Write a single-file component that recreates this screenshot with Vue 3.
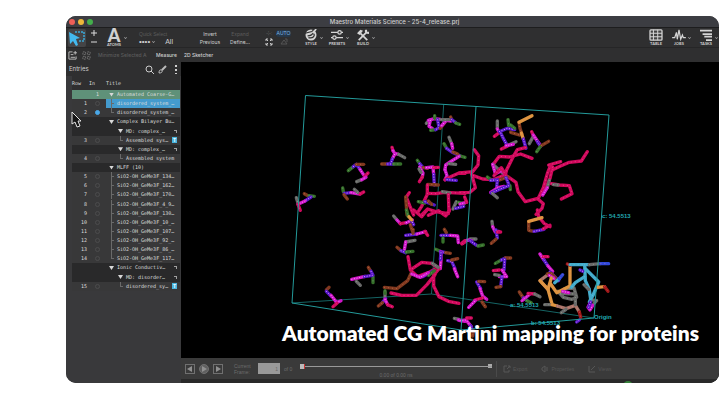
<script setup>
import { ref } from 'vue'

const names = ['134', '162', '170', '4_9', '130', '10_', '107', '92_', '86_', '117']
const rows = [
  { inc: '1', title: 'Automated Coarse-G…', kind: 'group', level: 0, state: 'active' },
  { n: 1, title: 'disordered_system_…', kind: 'entry', level: 0, state: 'selected' },
  { n: 2, title: 'disordered_system_…', kind: 'entry', level: 0, on: true, last: true },
  { title: 'Complex Bilayer Bu…', kind: 'group', level: 0 },
  { title: 'MD: complex_…', kind: 'group', level: 1, mark: 'flag' },
  { n: 3, title: 'Assembled sys…', kind: 'entry', level: 1, mark: 'T', last: true },
  { title: 'MD: complex_…', kind: 'group', level: 1, mark: 'flag' },
  { n: 4, title: 'Assembled system', kind: 'entry', level: 1, last: true },
  { title: 'MLFF (10)', kind: 'group', level: 0 },
  ...names.map((s, i) => ({ n: i + 5, title: `SiO2-OH_GeMe3F_${s}…`, kind: 'entry', level: 0, last: i === 9 })),
  { title: 'Ionic Conductiv…', kind: 'group', level: 0, mark: 'flag' },
  { title: 'MD: disorder…', kind: 'group', level: 1, mark: 'flag' },
  { n: 15, title: 'disordered_sy…', kind: 'entry', level: 1, mark: 'T', last: true },
]

const frame = ref('1')
const position = ref(0)

// Sticks are listed as [colour class, points], on a grid three times finer than the scene.
const regions = [
  {
    at: 'translate(285 85) scale(.33333)',
    sticks: [
      ['w', '424,115 436,104'], ['m', '430,106 448,101 466,103'], ['g', '449,92 449,100'], ['m', '436,106 432,124 442,130'],
      ['g', '437,136 452,134'], ['v', '458,104 462,128 452,134'], ['b', '480,112 466,130'], ['m', '470,122 484,106 498,108'],
      ['b', '497,96 500,104'], ['v', '500,104 512,113'], ['g', '512,114 524,118'], ['w', '468,104 492,104'],
      ['w', '492,157 500,176'], ['m', '500,176 503,190'], ['g', '477,176 485,190'], ['v', '485,190 500,201 526,213'],
      ['b', '504,201 518,207'], ['g', '526,213 540,217'], ['m', '522,214 500,228 482,240 480,254'], ['w', '492,236 512,238'],
      ['m', '480,254 486,272 480,284'], ['p', '480,284 500,274 522,264 540,265'], ['v', '486,284 514,286'],
      ['p', '321,187 324,197'], ['m', '324,197 329,205 341,208'], ['w', '341,208 359,218'], ['m', '329,208 322,222'],
      ['v', '322,222 317,236'], ['b', '290,237 308,237'], ['v', '308,237 326,237'], ['g', '326,237 347,237'],
      ['g', '190,257 205,245'], ['v', '205,245 214,238 225,253'], ['b', '214,238 236,238'], ['m', '225,253 239,274'],
      ['p', '239,274 249,264'], ['w', '215,290 230,284'], ['m', '230,284 243,277'],
      ['g', '173,309 175,320'], ['v', '178,325 198,323'], ['b', '177,329 187,342'], ['m', '198,323 225,327'], ['p', '225,327 236,321'],
      ['w', '208,313 218,322'], ['b', '58,326 69,332'], ['g', '72,332 88,334'], ['v', '78,336 60,348'], ['m', '60,348 39,358'],
      ['w', '34,338 39,354'], ['p', '39,358 46,376'],
      ['g', '397,226 404,236'], ['v', '404,236 414,248'], ['b', '414,248 428,250'], ['m', '404,246 414,264 412,276'], ['p', '412,276 403,290'],
      ['w', '402,252 408,262'], ['m', '424,248 444,246 446,268'], ['v', '446,268 448,300'], ['p', '446,248 460,247'],
      ['b', '428,298 460,300'], ['p', '427,300 427,328 410,364 398,382'], ['p', '427,325 452,326 480,322 540,325'],
      ['w', '472,320 494,324'], ['p', '373,323 364,336 374,362 386,390'], ['b', '362,336 366,390'],
      ['p', '490,328 492,380'], ['g', '400,350 420,354'], ['v', '420,350 448,360'], ['b', '430,348 440,358'],
      ['p', '410,390 428,372 452,380 490,386'], ['w', '504,372 514,350'], ['v', '512,370 536,364'], ['g', '520,352 538,356'],
    ],
  },
  {
    at: 'translate(460 85) scale(.33333)',
    sticks: [
      ['w', '112,108 112,132'], ['m', '112,132 118,142'], ['p', '103,154 118,143'], ['v', '118,140 142,130 164,134'],
      ['g', '144,104 146,122'], ['g', '152,120 164,130'], ['b', '152,142 178,150'], ['v', '122,144 132,164 142,182'],
      ['p', '124,192 142,184'], ['w', '146,180 168,170'], ['m', '138,182 160,178'],
      ['b', '177,112 180,130 186,148'], ['o', '177,112 216,92'], ['o', '184,144 190,162'], ['v', '190,162 198,190'],
      ['p', '215,140 220,152'], ['w', '208,176 220,154'], ['m', '220,150 232,168 242,182'], ['v', '232,170 242,184'],
      ['b', '244,182 266,169'], ['g', '230,200 240,186'],
      ['p', '196,188 172,194 158,218 140,254 136,270 168,292 174,320 196,350 234,340'],
      ['p', '100,238 118,214 148,216 182,207 216,220'], ['p', '43,194 56,212 54,240 38,260 0,264'],
      ['p', '34,264 46,308 30,322 0,323'], ['p', '40,272 68,282 100,284 128,272'], ['w', '98,238 128,264'], ['m', '98,238 106,266 128,256 138,274'],
      ['p', '102,272 124,248 140,276'], ['g', '82,276 94,286'], ['v', '92,286 120,284'], ['b', '120,284 144,276'], ['v', '138,278 148,302'],
      ['g', '150,302 151,314'], ['v', '112,286 110,306'], ['m', '92,322 114,308 132,304'], ['v', '94,324 116,314 146,302'], ['w', '98,326 112,338'],
      ['p', '272,240 262,266 250,308 234,342 250,356 246,370 228,388'], ['p', '278,246 270,280 250,326'], ['p', '266,240 302,230'],
      ['p', '278,254 300,244 328,232 364,228 382,200'], ['w', '268,286 262,308'], ['m', '262,308 248,330'],
      ['p', '274,296 298,300 328,302 336,326 304,342'], ['w', '280,299 294,300'],
      ['m', '0,357 18,352'], ['p', '14,336 20,352'],
    ],
  },
  {
    at: 'translate(285 210) scale(.33333)',
    sticks: [
      ['w', '326,18 336,30'], ['m', '336,30 346,41'], ['p', '346,41 364,38'], ['m', '364,38 382,30'], ['v', '378,30 386,44'],
      ['g', '364,0 370,20'], ['b', '376,44 382,62'], ['o', '372,20 380,30'], ['v', '362,76 396,72'], ['m', '396,72 422,65'], ['p', '420,64 428,76'],
      ['b', '384,58 384,70'], ['p', '386,0 410,20 426,0'], ['p', '430,16 460,2 482,18 494,0'],
      ['w', '362,96 390,91'], ['m', '362,96 358,120'], ['b', '336,112 348,122'], ['v', '348,122 362,128'], ['g', '364,126 384,124'],
      ['g', '452,118 466,124'], ['v', '466,124 482,128'], ['b', '482,128 496,130'], ['m', '468,126 468,150 466,176'], ['v', '468,128 466,148'],
      ['b', '478,58 484,68'], ['v', '468,76 496,76'], ['g', '474,84 474,96'], ['m', '496,76 518,78 520,98'], ['p', '530,100 540,92'],
      ['v', '488,152 500,154 510,176'], ['b', '500,150 518,146'], ['m', '508,176 518,200'],
      ['p', '369,140 376,180 398,200 430,188 448,178'], ['p', '382,176 410,157 440,160 462,176 446,196 446,228 462,260 490,274 522,280'],
      ['p', '450,194 426,224 394,256 350,256 318,249'], ['b', '298,232 336,236 368,212 378,190'], ['w', '442,160 460,172'],
      ['v', '414,200 446,182'], ['g', '430,196 448,182'], ['m', '380,192 406,202 430,188'],
      ['b', '250,172 256,182'], ['v', '258,184 264,196'], ['g', '264,200 264,218'], ['m', '200,208 240,199'], ['v', '238,200 262,196'], ['w', '214,214 226,226'],
      ['b', '124,240 132,232'], ['v', '124,244 138,258'], ['m', '138,256 154,276'], ['m', '154,278 168,272'], ['p', '144,290 156,280'],
      ['w', '300,246 300,264'], ['g', '300,242 300,250'], ['v', '302,266 292,278'], ['b', '280,288 292,278'], ['m', '300,268 308,284'], ['p', '308,284 322,290'],
      ['w', '508,325 522,328'], ['m', '520,330 540,334'],
    ],
  },
  {
    at: 'translate(460 210) scale(.33333)',
    sticks: [
      ['p', '232,0 236,20 252,40 270,50'], ['b', '206,36 206,60'], ['o', '206,34 246,23'], ['b', '208,62 224,64'], ['v', '222,64 252,58'], ['p', '250,56 270,46'],
      ['w', '96,34 98,50'], ['m', '98,50 106,66 116,64'], ['v', '108,60 112,84'], ['b', '94,100 108,88'], ['p', '112,66 122,66'],
      ['w', '30,87 48,87'], ['m', '8,100 22,90 34,92'], ['v', '30,92 50,106'], ['g', '54,108 70,105'], ['p', '6,102 16,94'],
      ['g', '106,160 124,150'], ['v', '124,150 136,144'], ['b', '136,144 152,144'], ['v', '134,148 132,180'], ['m', '126,180 140,200 118,200'],
      ['p', '100,182 118,180'], ['w', '104,194 118,196'], ['v', '126,200 122,230'], ['b', '108,232 122,230'],
      ['m', '240,132 252,150'], ['p', '250,140 264,140'], ['v', '252,150 264,168'], ['m', '264,168 278,184'], ['v', '270,186 296,212'],
      ['v', '50,216 62,236'], ['b', '56,214 74,215'], ['m', '60,236 68,258 80,268'], ['p', '44,270 68,264'], ['b', '66,276 76,290'], ['m', '26,292 46,272'],
      ['b', '178,246 190,264'], ['v', '190,264 202,272'], ['m', '186,272 210,252'], ['p', '204,250 224,252'], ['w', '224,252 240,260'], ['g', '200,272 214,278'],
      ['m', '0,332 18,330 34,350'], ['p', '20,324 34,324'], ['v', '32,348 40,366'], ['b', '40,362 38,378'],
      ['w', '294,244 310,262 336,268 350,262 342,234 314,236 300,250 344,252'],
      ['t', '264,238 240,212 266,192'], ['b', '262,192 274,190 288,206'], ['m', '268,196 282,206'], ['o', '240,212 264,238 276,282'], ['o', '264,238 274,204'],
      ['w', '254,284 274,284'], ['o', '276,284 292,288'], ['t', '292,288 318,296 346,286'], ['w', '304,308 318,298'], ['t', '346,286 358,306'], ['r', '358,306 362,322'],
      ['v', '350,336 358,330'], ['o', '272,222 290,248 330,228 330,168'], ['r', '322,162 332,166'], ['c', '330,164 374,164 388,164'],
      ['w', '388,164 422,161'], ['n', '422,161 446,161'], ['c', '374,164 376,212 388,238'], ['c', '376,176 416,216 398,258'],
      ['c', '374,200 346,218 334,232'], ['c', '298,206 284,218'], ['n', '308,194 298,206'], ['m', '308,244 326,248'], ['w', '346,262 346,284'],
      ['c', '388,240 392,268'], ['w', '372,224 386,238'], ['w', '398,270 410,272 402,280'],
      ['c', '398,256 388,276'], ['m', '390,280 384,292 390,300 398,286'], ['v', '392,276 386,292'], ['o', '412,232 434,230'], ['r', '434,230 444,244'], ['v', '360,180 368,184'],
    ],
  },
]
</script>

<template>
  <main class="page">
    <section class="window">
      <header class="titlebar">
        <span class="light red"></span><span class="light yellow"></span><span class="light green"></span>
        <h1>Maestro Materials Science - 25-4_release.prj</h1>
      </header>

      <div class="toolbar">
        <button class="select-tool" aria-label="Select">
          <svg viewBox="0 0 18 18"><path d="M7 3H16V12H10" fill="none" stroke="#38a8d8" stroke-width="1.5" stroke-dasharray="2 1" /><path d="M1 3L2 15L5 12L8 17L10 16L8 10L12 9Z" fill="#43b9ee" /></svg>
        </button>
        <div class="stack plus">
          <button aria-label="Add to selection"><svg viewBox="0 0 8 8"><path d="M4 1V7M1 4H7" /></svg></button>
          <button aria-label="Remove from selection"><svg viewBox="0 0 8 8"><path d="M1 4H7" /></svg></button>
        </div>
        <button class="atoms"><b>A</b><span>ATOMS</span></button>
        <i class="chev"></i>
        <div class="stack quick"><span class="dim">Quick Select</span><div class="quick-row"><span class="dots">••••</span><i class="chev"></i><button>All</button></div></div>
        <div class="stack words invert"><button>Invert</button><button>Previous</button></div>
        <div class="stack words define"><button class="dim">Expand</button><button>Define...</button></div>
        <div class="fit">
          <span class="dim">⊹:</span><button class="auto">AUTO</button>
          <svg viewBox="0 0 8 8"><path d="M1 3V1H3M5 1H7V3M7 5V7H5M3 7H1V5M1 1L3 3M7 1L5 3M7 7L5 5M1 7L3 5" fill="none" stroke="#c8c8c8" /></svg>
          <svg viewBox="0 0 8 8"><path d="M1 6L4 2L7 6ZM5 1H7V4" fill="none" stroke="#555" /></svg>
        </div>
        <button class="tool style">
          <svg viewBox="0 0 16 14"><circle cx="8" cy="7" r="6.4" fill="#d5d5d5" /><path d="M1 5L9 3L11 1M4 8Q9 8 10 5Q13 6 11 9Q9 11 5 10" fill="none" stroke="#303030" stroke-width="1.4" /><path d="M10 5L14 0" stroke="#d5d5d5" stroke-width="2" /></svg><span>STYLE</span>
        </button><i class="chev"></i>
        <button class="tool">
          <svg viewBox="0 0 16 14"><path d="M1 4H15M1 10H15" stroke="#d5d5d5" stroke-width="1.6" /><circle cx="11" cy="4" r="2" fill="#303030" stroke="#d5d5d5" stroke-width="1.4" /><circle cx="5" cy="10" r="2" fill="#303030" stroke="#d5d5d5" stroke-width="1.4" /></svg><span>PRESETS</span>
        </button><i class="chev"></i>
        <button class="tool">
          <svg viewBox="0 0 16 14"><path d="M3 13L12 4M5 5L13 13" stroke="#d5d5d5" stroke-width="2" /><path d="M1 5L5 1L8 2L4 7Z" fill="#d5d5d5" /><path d="M11 1Q10 5 15 5M12 1V4H15" fill="none" stroke="#d5d5d5" stroke-width="1.5" /></svg><span>BUILD</span>
        </button><i class="chev"></i>
        <span class="spacer"></span>
        <button class="tool">
          <svg viewBox="0 0 16 14"><rect x="1" y="1" width="14" height="12" rx="1" fill="#444" stroke="#d5d5d5" stroke-width="1.5" /><path d="M1 5H15M1 9H15M5 1V13M10 1V13" stroke="#d5d5d5" stroke-width="1.2" /></svg><span>TABLE</span>
        </button>
        <button class="tool jobs">
          <svg viewBox="0 0 16 14"><path d="M0 10H3L5 4L6 12L8 1L10 12L12 7L13 10H16" fill="none" stroke="#d5d5d5" stroke-width="1.4" /></svg><span>JOBS</span>
        </button><i class="chev"></i>
        <button class="tool tasks">
          <svg viewBox="0 0 16 14"><path d="M1 2H15M4 6H15M6 9H15M8 13H15" stroke="#d5d5d5" stroke-width="2" /></svg><span>TASKS</span>
        </button><i class="chev"></i>
      </div>

      <nav class="subbar">
        <svg viewBox="0 0 10 10"><path d="M5 1H1V9H9V6M3 4H6M3 7H8M6 2H10M8 0V4" fill="none" stroke="#c4c4c4" /></svg>
        <svg viewBox="0 0 10 10"><path d="M1 1H4V4H1ZM6 1H9V4H6ZM1 6H4V9H1ZM6 6H9V9H6Z" fill="none" stroke="#747474" stroke-dasharray="2 1" /></svg>
        <button class="dim minimize">Minimize Selected A</button>
        <button>Measure</button>
        <button class="sketcher">2D Sketcher</button>
      </nav>

      <div class="body">
        <aside class="sidebar">
          <div class="entries">
            <h2>Entries</h2>
            <svg viewBox="0 0 9 9"><circle cx="4" cy="4" r="3" fill="none" stroke="#ccc" /><path d="M6 6L9 9" stroke="#ccc" /></svg>
            <svg viewBox="0 0 9 9"><path d="M8 1L4 5" stroke="#bbb" stroke-width="2" /><path d="M1 8Q1 4 4 5Q5 8 1 8Z" fill="none" stroke="#bbb" /></svg>
            <svg viewBox="0 0 9 9"><path d="M4 0H6V2H4ZM4 4H6V6H4ZM4 8H6V9H4Z" fill="#d0d0d0" /></svg>
          </div>
          <table>
            <thead><tr><th class="c-row">Row</th><th class="c-in">In</th><th>Title</th></tr></thead>
            <tbody>
              <tr v-for="(r, i) in rows" :key="i" :class="[r.kind, r.state]">
                <td class="c-row">{{ r.n }}</td>
                <td class="c-in"><span v-if="r.inc">{{ r.inc }}</span><i v-else-if="r.n" class="dot" :class="{ on: r.on }"></i></td>
                <td class="c-title">
                  <div class="cell" :class="'level' + r.level">
                    <i v-if="r.kind === 'group'" class="tri"></i><i v-else class="branch" :class="{ last: r.last }"></i>
                    <span class="name">{{ r.title }}</span>
                    <i v-if="r.mark === 'flag'" class="flag"></i><b v-if="r.mark === 'T'" class="tmark">T</b>
                  </div>
                </td>
              </tr>
            </tbody>
          </table>
          <svg class="pointer" viewBox="0 0 11 17"><path d="M1 1V13L4 11L6 16L9 15L7 10H10Z" fill="#151515" stroke="#e4e4e4" /></svg>
        </aside>

        <div class="main">
          <div class="scene">
            <svg viewBox="181 62 538 296">
              <g class="cell-back"><path d="M443.7 104.3L431.5 294M292 303L431.5 294L594 318" /></g>
              <g v-for="(g, i) in regions" :key="i" :transform="g.at">
                <template v-for="(s, j) in g.sticks" :key="j">
                  <polyline :points="s[1]" class="stick" :class="s[0]" />
                  <polyline :points="s[1]" class="shine" :class="s[0]" />
                </template>
              </g>
              <path class="cell-box" d="M305.5 95.5L609 115L594 318L461 330L292 303ZM476 106.5L461 330" />
              <g class="axis">
                <text x="602" y="218">c: 54.5513</text><text x="510" y="307">a: 54.5513</text>
                <text x="531" y="325">b: 54.5513</text><text x="594" y="319">Origin</text>
              </g>
            </svg>
            <p class="caption">Automated CG Martini mapping for proteins</p>
          </div>
          <footer class="player">
            <div class="controls">
              <button class="sq" aria-label="Previous frame"><svg viewBox="0 0 8 8"><path d="M6 1V7L1 4Z" /></svg></button>
              <button class="sq round" aria-label="Play"><svg viewBox="0 0 8 8"><path d="M2 1V7L7 4Z" /></svg></button>
              <button class="sq" aria-label="Next frame"><svg viewBox="0 0 8 8"><path d="M2 1V7L7 4Z" /></svg></button>
              <label for="frame">Current<br />Frame:</label>
              <input id="frame" v-model="frame" class="frame" />
              <span class="of">of 0</span>
              <div class="track">
                <input v-model="position" type="range" min="0" max="100" aria-label="Trajectory position" />
                <span>0.00 of 0.00 ns</span>
              </div>
              <div class="extras">
                <button><svg viewBox="0 0 8 8"><path d="M4 1H1V7H6V5M5 1H7V3M7 1L4 4" /></svg>Export</button>
                <button><svg viewBox="0 0 8 8"><path d="M1 3L4 1V7L1 5ZM6 2V6" /></svg>Properties</button>
                <button><svg viewBox="0 0 8 8"><path d="M1 1V7H7M3 5L7 1" /></svg>Views</button>
              </div>
            </div>
            <div class="status"><i></i></div>
          </footer>
        </div>
      </div>
    </section>
  </main>
</template>

<style>
body { background: #fff; }
</style>

<style scoped>
* { box-sizing: border-box; }
.page { padding: 16px 1px 0 66px; font-family: "Liberation Sans", Arial, sans-serif; font-size: 6px; line-height: 8px; color: #d0d0d0; }
h1, h2, p { margin: 0; font: inherit; }
button { margin: 0; padding: 0; border: 0; background: none; color: inherit; font: inherit; white-space: nowrap; }
svg { display: block; }
.window { overflow: hidden; border-radius: 10px; background: #2f2f30; }
.titlebar { display: flex; align-items: center; gap: 3px; height: 11px; padding-left: 3px; background: #3c3d42; }
.titlebar h1 { flex: 1; padding-right: 26px; text-align: center; font-family: Inter, sans-serif; font-weight: 500; }
.light { width: 6px; height: 6px; border-radius: 50%; }
.red { background: #ee5f57; }
.yellow { background: #edb83a; }
.green { background: #43ae4b; }
.dim { color: #5c5c5c; }
.spacer { flex: 1; }

.toolbar { display: flex; align-items: center; height: 21px; padding: 0 1px 0 2px; border-top: 1px solid #1d1d1e; border-bottom: 1px solid #262627; }
.select-tool { width: 18px; height: 18px; background: #444446; border-radius: 2px; }
.select-tool svg { width: 18px; height: 18px; }
.stack { display: flex; flex-direction: column; }
.plus { width: 14px; padding-left: 2px; align-items: center; gap: 1px; }
.plus svg { width: 8px; height: 8px; fill: none; stroke: #dcdcdc; stroke-width: 1; }
.atoms { display: flex; flex-direction: column; align-items: center; width: 20px; margin-left: 4px; font-family: Lato, sans-serif; font-size: 4px; line-height: 5px; font-weight: 700; }
.atoms b { font-size: 18px; line-height: 14px; }
.chev { width: 3px; height: 3px; border: solid #a0a0a0; border-width: 0 1px 1px 0; transform: rotate(45deg) scale(.7); flex: none; }
.quick { width: 51px; margin-left: 12px; font-size: 5px; }
.quick-row { display: flex; align-items: center; gap: 2px; }
.quick-row button { margin-left: 8px; font-size: 7px; }
.dots { font-size: 8px; }
.words { width: 24px; margin-left: 8px; align-items: center; font-family: Inter, sans-serif; font-size: 5px; }
.define { margin-left: 6px; }
.fit { display: grid; grid-template-columns: 8px 15px; gap: 1px 3px; margin-left: 13px; align-items: center; justify-items: center; }
.fit svg { width: 8px; height: 8px; }
.auto { width: 15px; border-radius: 3px; background: #26384a; color: #7ab4e4; font-size: 5px; line-height: 7px; }
.tool { display: flex; flex-direction: column; align-items: center; width: 16px; margin-right: 1px; margin-left: 6px; font-family: Lato, sans-serif; font-size: 4px; line-height: 5px; font-weight: 700; }
.tool svg { width: 14px; height: 12px; }
.style { margin-left: 12px; }
.tasks { margin-left: 7px; }

.subbar { display: flex; align-items: center; height: 14px; padding-left: 2px; gap: 5px; font-family: Inter, sans-serif; font-size: 5px; font-weight: 500; }
.subbar svg { width: 9px; height: 9px; }
.minimize { width: 53px; margin-left: 2px; text-align: left; }
.sketcher { margin-left: 2px; }

.body { display: flex; align-items: stretch; }
.sidebar { position: relative; width: 115px; flex: none; background: #39393b; }
.entries { display: flex; align-items: center; gap: 4px; height: 14px; padding: 0 1px 0 3px; background: #2f2f30; font-size: 6px; }
.entries h2 { flex: 1; font-size: 6px; font-family: Inter, sans-serif; }
.entries svg { width: 9px; height: 9px; }
table { width: 108px; margin-left: 6px; height: 215px; border-collapse: collapse; table-layout: fixed; color: #dcdcdc; font-family: "DejaVu Sans Mono", monospace; font-size: 5px; line-height: 7px; }
th { height: 14px; padding: 0; text-align: left; font-weight: 400; background: #2f2f30; }
td { height: 9px; padding: 0; }
.c-row { width: 17px; }
.c-in { width: 17px; }
td.c-row { padding-right: 2px; text-align: right; }
td.c-in { text-align: center; }
.group { background: #29292a; }
.entry { background: #383839; }
.active { background: #5f9179; }
.selected .c-title { background: #449bce; }
.dot { display: block; width: 5px; height: 5px; margin: auto; border: 1px solid #4c4c4d; border-radius: 50%; }
.dot.on { background: #4aa8e8; border-color: #4aa8e8; }
.cell { display: flex; align-items: center; gap: 3px; height: 9px; padding-right: 3px; padding-left: 3px; white-space: nowrap; }
.level1 { padding-left: 12px; }
.name { flex: 1; }
.tri { width: 5px; height: 4px; background: #d8d8d8; clip-path: polygon(0 0, 100% 0, 50% 100%); flex: none; }
.branch { width: 5px; height: 9px; flex: none; background: linear-gradient(#6a6a6a, #6a6a6a) 2px 0 / 1px 100% no-repeat, linear-gradient(#6a6a6a, #6a6a6a) 2px 4px / 4px 1px no-repeat; }
.branch.last { background-size: 1px 5px, 4px 1px; }
.flag { width: 3px; height: 3px; border: solid #a0a0a0; border-width: 1px 1px 0 0; }
.tmark { width: 5px; height: 6px; background: #49b5df; color: #fff; line-height: 6px; text-align: center; }
.pointer { position: absolute; top: 49px; left: 5px; width: 11px; height: 17px; }

.main { flex: 1; min-width: 0; display: flex; flex-direction: column; background: #000; }
.scene { position: relative; }
.scene svg { width: 100%; height: auto; }
.cell-box, .cell-back path { fill: none; stroke: #239a9a; stroke-width: 1; }
.cell-back path { stroke: #156464; }
.stick, .shine { fill: none; stroke-linecap: round; stroke-linejoin: round; stroke-width: 10; }
.shine { stroke-width: 2; stroke: #ff90b8; stroke-dasharray: 1 11; opacity: .6; }
.shine.m, .shine.v { stroke: #ffb0ff; stroke-width: 3; stroke-dasharray: 1 7; opacity: .8; }
.shine.g, .shine.w { stroke: #b8d8b0; }
.shine.b, .shine.o { stroke: #f0a070; }
.shine.c { stroke: #70e0f0; }
.stick.p { stroke: #d0085c; }
.stick.m { stroke: #d014c8; }
.stick.v { stroke: #5416c8; }
.stick.g { stroke: #35702a; }
.stick.b { stroke: #80381f; }
.stick.w { stroke: #686868; }
.stick.o { stroke: #dd9440; }
.stick.t { stroke: #a87468; }
.stick.c { stroke: #43aacb; }
.stick.r { stroke: #a01818; }
.stick.n { stroke: #3048d8; }
.axis { fill: #20a8b0; font-family: "Liberation Sans", sans-serif; font-size: 6px; font-weight: 700; }
.caption { position: absolute; right: 20px; bottom: 12px; color: #fff; font-family: Lato, sans-serif; font-size: 21px; font-weight: 800; line-height: 26px; white-space: nowrap; }

.player { background: #3a3a3a; color: #6c6c6c; font-size: 5px; line-height: 6px; }
.controls { display: flex; align-items: center; height: 21px; padding-left: 4px; gap: 4px; }
.sq { width: 10px; height: 10px; border: 1px solid #707070; }
.sq svg { width: 8px; height: 8px; fill: #909090; }
.sq.round { border-radius: 50%; background: #606060; }
.controls label { width: 20px; margin-left: 7px; }
.frame { width: 22px; height: 11px; padding: 0 2px; border: 0; background: #999; color: #6a6a6a; font: inherit; text-align: right; }
.of { width: 12px; }
.track { flex: 1; display: flex; flex-direction: column; align-items: center; gap: 3px; padding-top: 4px; }
.track input { width: 100%; height: 5px; margin: 0; appearance: none; background: linear-gradient(#999, #999) 0 2px / 100% 1px no-repeat, linear-gradient(#aaa, #aaa) 100% 0 / 4px 4px no-repeat; }
.track input::-webkit-slider-thumb { appearance: none; width: 5px; height: 5px; background: #bbb; border-right: 1px solid #c33; }
.extras { display: flex; gap: 14px; width: 223px; padding-left: 6px; border-left: 1px solid #4a4a4a; color: #565656; line-height: 16px; }
.extras button { display: flex; align-items: center; gap: 2px; }
.extras svg { width: 8px; height: 8px; fill: none; stroke: #565656; }
.status { height: 4px; padding-left: 442px; overflow: hidden; background: #292929; }
.status i { display: block; width: 10px; height: 10px; border-radius: 50%; background: #36803a; margin-top: 2px; }
</style>
